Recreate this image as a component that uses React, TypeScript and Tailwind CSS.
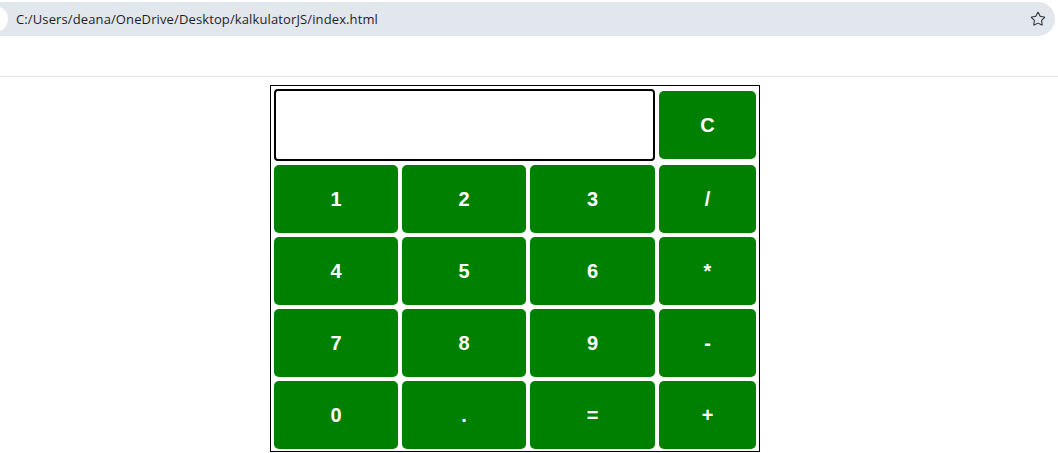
import { Star } from 'lucide-react'

const keys = ['1', '2', '3', '/', '4', '5', '6', '*', '7', '8', '9', '-', '0', '.', '=', '+']

function CalcButton({ label }: { label: string }) {
  return (
    <button className="h-[68px] w-full rounded-[5px] bg-[#008000] text-[20px] font-bold text-white font-['Liberation_Sans',Arial,sans-serif]">
      {label}
    </button>
  )
}

export default function App() {
  return (
    <div className="min-h-screen bg-white">
      {/* browser chrome */}
      <div className="h-[77px] border-b border-[#e3e3e3] pt-[2px]">
        <div className="flex h-[34px] items-center rounded-r-full bg-[#e2e6ed] mr-[3px]">
          <div className="-ml-[22px] h-[26px] w-[30px] rounded-full bg-white" />
          <span className="ml-[8px] mt-[1px] text-[13px] tracking-[0.12px] text-[#1f1f1f] font-['Open_Sans',sans-serif]">
            C:/Users/deana/OneDrive/Desktop/kalkulatorJS/index.html
          </span>
          <Star className="ml-auto mr-[9px] h-[16px] w-[16px] text-[#333]" strokeWidth={1.6} />
        </div>
      </div>

      {/* calculator */}
      <div className="ml-[270px] mt-[8px] w-fit border border-black pl-[3px] pr-[3px] pt-[3px] pb-[2px]">
        <div className="grid grid-cols-[124px_124px_125px_97px] gap-[4px]">
          <div className="col-span-3 h-[72px] rounded-[4px] border-2 border-black bg-white" />
          <div className="flex items-center">
            <CalcButton label="C" />
          </div>
          {keys.map((k) => (
            <CalcButton key={k} label={k} />
          ))}
        </div>
      </div>
    </div>
  )
}
